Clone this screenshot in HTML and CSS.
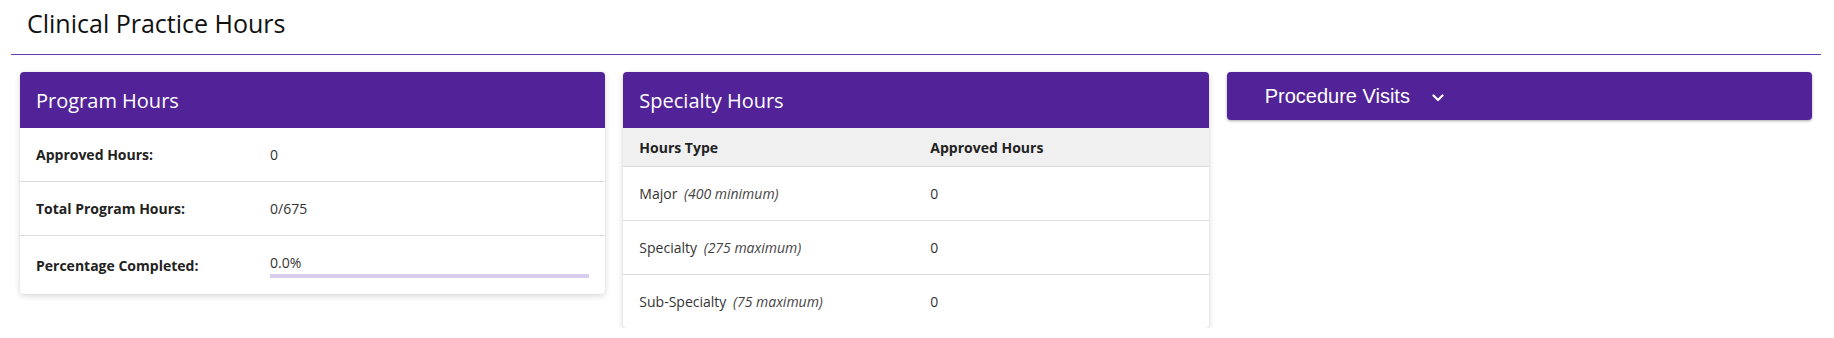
FILE: index.html
```html
<!DOCTYPE html>
<html lang="en">
<head>
<meta charset="utf-8">
<title>Clinical Practice Hours</title>
<link rel="stylesheet" href="styles.css">
</head>
<body>
<div class="page">
  <header class="page-header">
    <h1 class="page-title">Clinical Practice Hours</h1>
  </header>
  <div class="cards">
    <section class="card">
      <div class="card-head"><h2 class="card-title">Program Hours</h2></div>
      <div class="card-body">
        <div class="kv-row">
          <div class="kv-label">Approved Hours:</div>
          <div class="kv-value">0</div>
        </div>
        <div class="kv-row">
          <div class="kv-label">Total Program Hours:</div>
          <div class="kv-value">0/675</div>
        </div>
        <div class="kv-row kv-last">
          <div class="kv-label">Percentage Completed:</div>
          <div class="kv-value">
            <div class="pct-text">0.0%</div>
            <div class="progress"><div class="progress-fill" style="width:0%"></div></div>
          </div>
        </div>
      </div>
    </section>

    <section class="card">
      <div class="card-head"><h2 class="card-title">Specialty Hours</h2></div>
      <div class="card-body">
        <div class="tbl-row tbl-head">
          <div class="tbl-cell">Hours Type</div>
          <div class="tbl-cell">Approved Hours</div>
        </div>
        <div class="tbl-row">
          <div class="tbl-cell">Major <em class="note">(400 minimum)</em></div>
          <div class="tbl-cell">0</div>
        </div>
        <div class="tbl-row">
          <div class="tbl-cell">Specialty <em class="note">(275 maximum)</em></div>
          <div class="tbl-cell">0</div>
        </div>
        <div class="tbl-row tbl-last">
          <div class="tbl-cell">Sub-Specialty <em class="note">(75 maximum)</em></div>
          <div class="tbl-cell">0</div>
        </div>
      </div>
    </section>

    <section class="card card-collapsed">
      <button class="toggle" type="button">
        <span class="toggle-label">Procedure Visits</span>
        <svg class="chevron" width="12" height="8" viewBox="0 0 12 8" aria-hidden="true">
          <path d="M1.5 1.5 L6 6 L10.5 1.5" fill="none" stroke="#fff" stroke-width="2.2" stroke-linecap="round" stroke-linejoin="round"/>
        </svg>
      </button>
    </section>
  </div>
</div>
</body>
</html>
```

FILE: styles.css
```css
* { box-sizing: border-box; }

html, body {
  margin: 0;
  padding: 0;
  background: #ffffff;
}

body {
  font-family: "Open Sans", "Noto Sans", sans-serif;
  color: #222;
}

.page {
  padding: 0 13px 0 11px;
}

.page-header {
  padding: 7px 16px 14px 16px;
  border-bottom: 1px solid #6a3cbc;
}

.page-title {
  margin: 0;
  font-size: 25px;
  font-weight: 400;
  line-height: 33px;
  color: #111;
}

.cards {
  display: flex;
  align-items: flex-start;
  gap: 18px;
  padding: 17px 9px 0 9px;
}

.card {
  flex: 1 1 0;
  min-width: 0;
  background: #fff;
  border-radius: 4px;
  box-shadow: 0 2px 6px rgba(0, 0, 0, 0.16), 0 0 2px rgba(0, 0, 0, 0.06);
}

.card-head {
  height: 56px;
  display: flex;
  align-items: center;
  padding: 0 16px;
  background: #522398;
  border-radius: 4px 4px 0 0;
}

.card-title {
  margin: 0;
  font-size: 20px;
  font-weight: 400;
  color: #fff;
  line-height: 27px;
}

/* Program hours key/value rows */
.kv-row {
  display: grid;
  grid-template-columns: 234px 1fr;
  align-items: center;
  padding: 0 16px;
  min-height: 54px;
  border-bottom: 1px solid #dcdcdc;
  font-size: 14px;
}

.kv-last {
  min-height: 58px;
  border-bottom: 0;
}

.kv-label {
  font-weight: 700;
  color: #222;
}

.kv-value {
  color: #333;
}

.pct-text {
  line-height: 19px;
}

.progress {
  margin-top: 2px;
  height: 4px;
  background: #d9cdee;
}

.progress-fill {
  height: 100%;
  background: #522398;
}

/* Specialty table */
.tbl-row {
  display: grid;
  grid-template-columns: 307px 1fr;
  align-items: center;
  min-height: 54px;
  border-bottom: 1px solid #dcdcdc;
  font-size: 14px;
  color: #333;
}

.tbl-cell {
  padding-left: 16px;
}

.tbl-row .tbl-cell:last-child {
  padding-left: 0;
}

.tbl-head {
  min-height: 39px;
  background: #f0f0f0;
  font-weight: 700;
  color: #222;
}

.tbl-last {
  min-height: 53px;
  border-bottom: 0;
}

.note {
  font-size: 14px;
  font-style: italic;
  color: #444;
  margin-left: 3px;
}

/* Collapsed procedure visits */
.card-collapsed {
  background: #522398;
  box-shadow: 0 1px 3px rgba(0, 0, 0, 0.35);
}

.toggle {
  display: flex;
  align-items: center;
  gap: 22px;
  width: 100%;
  height: 48px;
  padding: 0 38px;
  border: 0;
  background: transparent;
  color: #fff;
  cursor: pointer;
  font-family: "Liberation Sans", Arial, sans-serif;
  font-size: 20px;
  text-align: left;
}

.toggle-label {
  line-height: 23px;
}

.chevron {
  display: block;
  margin-top: 3px;
}
```
